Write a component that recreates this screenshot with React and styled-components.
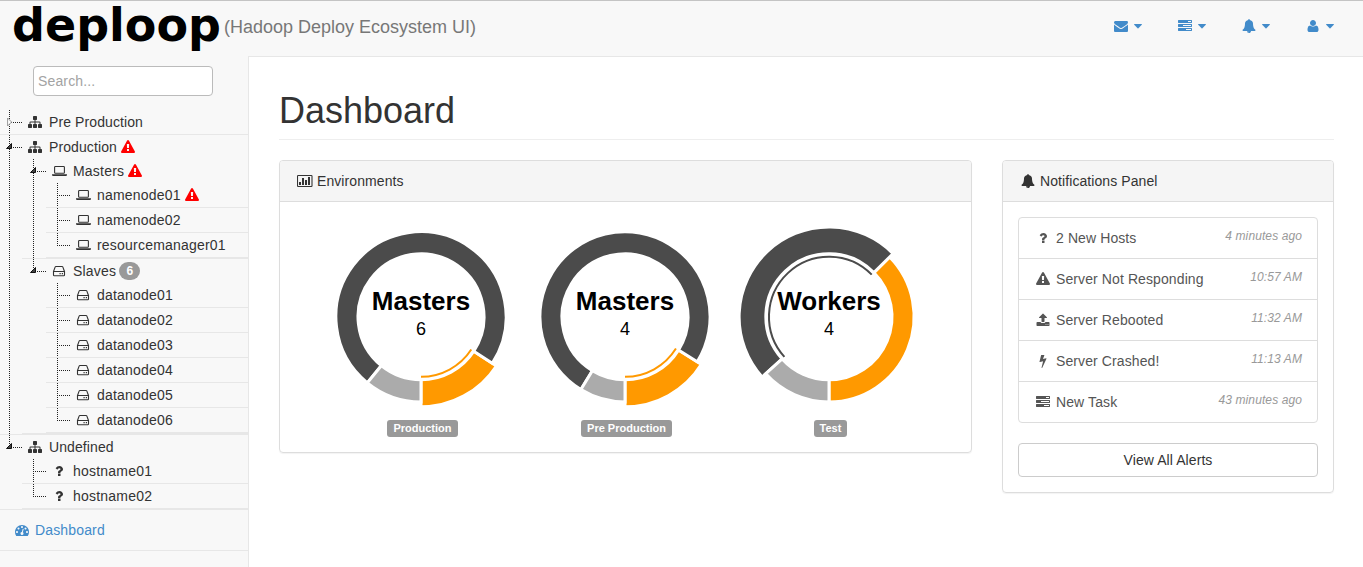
import React from "react";
import styled, { createGlobalStyle } from "styled-components";

const GlobalStyle = createGlobalStyle`
  *, *::before, *::after { box-sizing: border-box; }
  body {
    margin: 0;
    background: #fff;
    color: #333;
    font-family: "Liberation Sans", Arial, sans-serif;
    font-size: 14px;
    line-height: 20px;
  }
  #root { height: 100vh; overflow: hidden; }
`;

/* ---------- icons ---------- */

const glyphs = {
  envelope: "M1792 710v794q0 66-47 113t-113 47h-1472q-66 0-113-47t-47-113v-794q44 49 101 87 362 246 497 345 57 42 92.5 65.5t94.5 48 110 24.5h2q51 0 110-24.5t94.5-48 92.5-65.5q170-123 498-345 57-39 100-87zm0-294q0 79-49 151t-122 123q-376 261-468 325-10 7-42.5 31t-54 38.5-52 32.5-57.5 27-50 9h-2q-23 0-50-9t-57.5-27-52-32.5-54-38.5-42.5-31q-91-64-262-182.5t-205-142.5q-62-42-117-115.5t-55-136.5q0-78 41.5-130t118.5-52h1472q65 0 112.5 47t47.5 113z",
  tasks: "M1024 1408h640v-128h-640v128zm-384-512h1024v-128h-1024v128zm640-512h384v-128h-384v128zm512 832v256q0 26-19 45t-45 19h-1664q-26 0-45-19t-19-45v-256q0-26 19-45t45-19h1664q26 0 45 19t19 45zm0-512v256q0 26-19 45t-45 19h-1664q-26 0-45-19t-19-45v-256q0-26 19-45t45-19h1664q26 0 45 19t19 45zm0-512v256q0 26-19 45t-45 19h-1664q-26 0-45-19t-19-45v-256q0-26 19-45t45-19h1664q26 0 45 19t19 45z",
  bell: "M912 1696q0-16-16-16-59 0-101.5-42.5t-42.5-101.5q0-16-16-16t-16 16q0 73 51.5 124.5t124.5 51.5q16 0 16-16zm816-288q0 52-38 90t-90 38h-448q0 106-75 181t-181 75-181-75-75-181h-448q-52 0-90-38t-38-90q50-42 91-88t85-119.5 74.5-158.5 50-206 19.5-260q0-152 117-282.5t307-158.5q-8-19-8-39 0-40 28-68t68-28 68 28 28 68q0 20-8 39 190 28 307 158.5t117 282.5q0 139 19.5 260t50 206 74.5 158.5 85 119.5 91 88z",
  user: "M1600 1405q0 120-73 189.5t-194 69.5h-874q-121 0-194-69.5t-73-189.5q0-53 3.500-103.500t14-109 26.500-108.500 43-97.500 62-81 85.500-53.500 111.500-20q9 0 42 21.500t74.500 48 108 48 133.500 21.500 133.500-21.500 108-48 74.500-48 42-21.500q61 0 111.500 20t85.500 53.500 62 81 43 97.500 26.500 108.500 14 109 3.500 103.500zm-320-893q0 159-112.500 271.500t-271.500 112.500-271.500-112.500-112.500-271.500 112.500-271.500 271.500-112.500 271.500 112.500 112.500 271.500z",
  warning: "M1024 1375v-190q0-14-9.500-23.500t-22.500-9.500h-192q-13 0-22.500 9.500t-9.500 23.500v190q0 14 9.500 23.500t22.500 9.500h192q13 0 22.500-9.500t9.500-23.500zm-2-374l18-459q0-12-10-19-13-11-24-11h-220q-11 0-24 11-10 7-10 21l17 457q0 10 10 16.500t24 6.500h185q14 0 23.500-6.500t10.500-16.500zm-14-934l768 1408q35 63-2 126-17 29-46.500 46t-63.500 17h-1536q-34 0-63.500-17t-46.500-46q-37-63-2-126l768-1408q17-31 47-49t65-18 65 18 47 49z",
  sitemap: "M1792 1248v320q0 40-28 68t-68 28h-320q-40 0-68-28t-28-68v-320q0-40 28-68t68-28h96v-192h-512v192h96q40 0 68 28t28 68v320q0 40-28 68t-68 28h-320q-40 0-68-28t-28-68v-320q0-40 28-68t68-28h96v-192h-512v192h96q40 0 68 28t28 68v320q0 40-28 68t-68 28h-320q-40 0-68-28t-28-68v-320q0-40 28-68t68-28h96v-192q0-52 38-90t90-38h512v-192h-96q-40 0-68-28t-28-68v-320q0-40 28-68t68-28h320q40 0 68 28t28 68v320q0 40-28 68t-68 28h-96v192h512q52 0 90 38t38 90v192h96q40 0 68 28t28 68z",
  question: "M1088 1256v240q0 16-12 28t-28 12h-240q-16 0-28-12t-12-28v-240q0-16 12-28t28-12h240q16 0 28 12t12 28zm316-600q0 54-15.500 101t-35 76.500-55 59.500-57.500 43.500-61 35.500q-41 23-68.500 65t-27.500 67q0 17-12 32.500t-28 15.500h-240q-15 0-25.500-18.500t-10.500-37.500v-45q0-83 65-156.500t143-108.500q59-27 84-56t25-76q0-42-46.500-74t-107.500-32q-65 0-108 29-35 25-107 115-13 16-31 16-12 0-25-8l-164-125q-13-10-15.500-25t5.500-28q160-266 464-266 80 0 161 31t146 83 106 127.500 41 158.500z",
  bolt: "M1333 566q18 20 7 44l-540 1157q-13 25-42 25-4 0-14-2-17-5-25.500-19t-4.500-30l197-808-406 101q-4 1-12 1-18 0-31-11-18-15-13-39l201-825q4-14 16-23t28-9h328q19 0 32 12.500t13 29.500q0 8-5 18l-171 463 396-98q8-2 12-2 19 0 34 15z",
  upload: "M1344 1472q0-26-19-45t-45-19-45 19-19 45 19 45 45 19 45-19 19-45zm256 0q0-26-19-45t-45-19-45 19-19 45 19 45 45 19 45-19 19-45zm128-224v320q0 40-28 68t-68 28h-1472q-40 0-68-28t-28-68v-320q0-40 28-68t68-28h427q21 56 70.500 92t110.500 36h256q61 0 110.500-36t70.500-92h427q40 0 68 28t28 68zm-325-648q-17 40-59 40h-256v448q0 26-19 45t-45 19h-256q-26 0-45-19t-19-45v-448h-256q-42 0-59-40-17-39 14-69l448-448q18-19 45-19t45 19l448 448q31 30 14 69z",
  gauge: "M384 1152q0-53-37.500-90.500t-90.500-37.500-90.500 37.500-37.500 90.500 37.500 90.500 90.500 37.500 90.500-37.500 37.500-90.500zm192-448q0-53-37.500-90.500t-90.500-37.500-90.500 37.500-37.500 90.500 37.500 90.500 90.500 37.500 90.500-37.500 37.500-90.500zm428 481l101-382q6-26-7.500-48.500t-38.500-29.500-48 6.500-30 39.500l-101 382q-60 5-107 43.500t-63 98.500q-20 77 20 146t117 89 146-20 89-117q16-60-6-117t-72-91zm660-33q0-53-37.500-90.500t-90.500-37.500-90.500 37.500-37.500 90.500 37.500 90.500 90.500 37.500 90.500-37.500 37.500-90.500zm-640-640q0-53-37.500-90.500t-90.500-37.500-90.500 37.500-37.500 90.500 37.500 90.500 90.500 37.500 90.500-37.500 37.500-90.500zm448 192q0-53-37.500-90.500t-90.500-37.500-90.500 37.500-37.500 90.500 37.500 90.500 90.500 37.500 90.500-37.500 37.500-90.500zm320 448q0 261-141 483-19 29-54 29h-1402q-35 0-54-29-141-221-141-483 0-182 71-348t191-286 286-191 348-71 348 71 286 191 191 286 71 348z",
};

const IconSlot = styled.span`
  flex: none;
  display: inline-flex;
  justify-content: center;
  align-items: center;
  width: ${(p) => p.$width || 18}px;
  height: 14px;
  color: ${(p) => p.$color || "inherit"};
  svg { display: block; flex: none; }
`;

function Icon({ name, width, color }) {
  let drawing;
  if (name === "laptop") {
    drawing = (
      <svg width="15" height="14" viewBox="0 0 15 14">
        <rect x="2.600" y="2.500" width="9.800" height="6.800" rx="0.800" fill="none" stroke="currentColor" strokeWidth="1.100" />
        <path d="M0 10.200h15v0.800q0 .9-1.200.9H1.200Q0 11.900 0 11z" fill="currentColor" />
      </svg>
    );
  } else if (name === "disk") {
    drawing = (
      <svg width="14" height="14" viewBox="0 0 14 14">
        <path
          d="M1.500 7.500h11v3.500q0 .8-.8.8H2.300q-.8 0-.8-.8zM1.600 7.300L3.200 2.900q.2-.4.700-.4h6.200q.5 0 .7.400l1.600 4.400"
          fill="none"
          stroke="currentColor"
          strokeWidth="1.100"
        />
        <path d="M7.500 9h1.200v1.200H7.500zM9.800 9H11v1.200H9.800z" fill="currentColor" />
      </svg>
    );
  } else if (name === "chart") {
    drawing = (
      <svg width="16" height="14" viewBox="0 0 16 14">
        <rect x="0.500" y="1.500" width="14.500" height="11" rx="0.700" fill="none" stroke="currentColor" strokeWidth="1.100" />
        <path d="M2 8h2v3H2zM5 4h2v7H5zM8 6h2v5H8zM11 3h2v8h-2z" fill="currentColor" />
      </svg>
    );
  } else {
    drawing = (
      <svg width="14" height="14" viewBox="0 0 1792 1792">
        <path d={glyphs[name]} fill="currentColor" />
      </svg>
    );
  }
  return <IconSlot $width={width} $color={color}>{drawing}</IconSlot>;
}

const CaretSvg = styled.svg`
  display: block;
  margin-top: 1px;
`;

const Caret = () => (
  <CaretSvg width="8" height="5" viewBox="0 0 8 5">
    <path d="M.5 0h7q.7.200.3.800L4.400 4.300q-.4.400-.8 0L.2.800Q-.2.200.5 0z" fill="currentColor" />
  </CaretSvg>
);

/* ---------- header ---------- */

const Page = styled.div`
  display: flex;
  flex-direction: column;
  height: 100%;
`;

const Header = styled.header`
  flex: none;
  display: flex;
  justify-content: space-between;
  height: 56px;
  padding: 0 29px 0 12px;
  border-top: 1px solid #c4c4c4;
  background: #f8f8f8;
`;

const Brand = styled.div`
  display: flex;
  color: #777;
  font-size: 18px;
  line-height: 52px;
`;

const Logo = styled.span`
  width: 212px;
  color: #000;
  font: bold 46px/48px "DejaVu Sans", sans-serif;
`;

const NavIcons = styled.nav`
  display: flex;
  align-items: center;
  gap: 34px;
  height: 50px;
`;

const NavButton = styled.a`
  display: flex;
  align-items: center;
  gap: 4px;
  color: #428bca;
`;

/* ---------- sidebar ---------- */

const Body = styled.div`
  flex: 1;
  display: flex;
  min-height: 0;
`;

const Sidebar = styled.aside`
  flex: none;
  width: 248px;
  background: #f8f8f8;
`;

const SearchBox = styled.div`
  padding: 10px 35px 14px 33px;
`;

const SearchInput = styled.input`
  display: block;
  width: 180px;
  height: 30px;
  padding: 0 4px;
  border: 1px solid #bbb;
  border-radius: 4px;
  background: #fff;
  font: 14px "Liberation Sans", Arial, sans-serif;
  letter-spacing: 0.15px;
  &::placeholder { color: #a3a3a3; opacity: 1; }
`;

const Branch = styled.ul`
  margin: 0;
  padding: 0 0 0 ${(p) => (p.$depth === 0 ? 0 : p.$depth === 1 ? 22 : 24)}px;
  list-style: none;
`;

const Node = styled.li`
  --rail: ${(p) => (p.$depth === 0 ? 9 : 11)}px;
  border-bottom: 1px solid #e7e7e7;
  background-repeat: no-repeat;
  background-image:
    repeating-linear-gradient(to bottom, #222 0 1px, transparent 1px 2px),
    repeating-linear-gradient(to right, #222 0 1px, transparent 1px 2px);
  background-position: var(--rail) 0, calc(var(--rail) + 2px) 12px;
  background-size: 1px ${(p) => (p.$last ? "13px" : "100%")}, 11px 1px;
`;

const NodeRow = styled.div`
  display: flex;
  align-items: center;
  height: 24px;
  padding-left: ${(p) => (p.$depth === 0 ? 4 : 6)}px;
`;

const ToggleSlot = styled.span`
  flex: none;
  width: 22px;
  height: 12px;
  svg { display: block; }
`;

const NodeLabel = styled.span`
  margin: 0 4px;
  padding-left: 1px;
  letter-spacing: ${(p) => (p.$depth === 0 ? 0.1 : 0.21)}px;
`;

const Badge = styled.span`
  width: 21px;
  height: 18px;
  margin-left: -1px;
  border-radius: 9px;
  background: #999;
  color: #fff;
  font-size: 12px;
  font-weight: bold;
  line-height: 18px;
  text-align: center;
`;

const SideLink = styled.a`
  display: flex;
  align-items: center;
  gap: 4px;
  height: 41px;
  padding-left: 13px;
  border-bottom: 1px solid #e7e7e7;
  color: #428bca;
  letter-spacing: 0.15px;
`;

const datanodes = ["01", "02", "03", "04", "05", "06"];

const tree = [
  { label: "Pre Production", icon: "sitemap", collapsed: true },
  {
    label: "Production",
    icon: "sitemap",
    alert: true,
    children: [
      {
        label: "Masters",
        icon: "laptop",
        alert: true,
        children: [
          { label: "namenode01", icon: "laptop", alert: true },
          { label: "namenode02", icon: "laptop" },
          { label: "resourcemanager01", icon: "laptop" },
        ],
      },
      {
        label: "Slaves",
        icon: "disk",
        count: 6,
        children: datanodes.map((n) => ({ label: "datanode" + n, icon: "disk" })),
      },
    ],
  },
  {
    label: "Undefined",
    icon: "sitemap",
    children: [
      { label: "hostname01", icon: "question" },
      { label: "hostname02", icon: "question" },
    ],
  },
];

function Toggle({ node }) {
  return (
    <ToggleSlot>
      {node.children && (
        <svg width="10" height="12" viewBox="0 0 10 12">
          <path d="M2.500 7.500h5v-5z" fill="#444" stroke="#111" strokeWidth="1" />
        </svg>
      )}
      {node.collapsed && (
        <svg width="10" height="12" viewBox="0 0 10 12">
          <path d="M3.600 2v8l4-4z" fill="#fff" stroke="#999" strokeWidth="1" />
        </svg>
      )}
    </ToggleSlot>
  );
}

function Tree({ nodes, depth }) {
  return (
    <Branch $depth={depth}>
      {nodes.map((node, i) => (
        <Node key={node.label} $depth={depth} $last={i === nodes.length - 1}>
          <NodeRow $depth={depth}>
            <Toggle node={node} />
            <Icon name={node.icon} />
            <NodeLabel $depth={depth}>{node.label}</NodeLabel>
            {node.alert && <Icon name="warning" width={14} color="#f00" />}
            {node.count && <Badge>{node.count}</Badge>}
          </NodeRow>
          {node.children && <Tree nodes={node.children} depth={depth + 1} />}
        </Node>
      ))}
    </Branch>
  );
}

/* ---------- main area ---------- */

const Main = styled.main`
  flex: 1;
  min-width: 0;
  padding: 0 29px 0 30px;
  border-top: 1px solid #e7e7e7;
  border-left: 1px solid #e7e7e7;
`;

const PageTitle = styled.h1`
  margin: 0 0 20px;
  padding-top: 34px;
  height: 83px;
  border-bottom: 1px solid #eee;
  font-size: 36px;
  font-weight: normal;
  line-height: 40px;
`;

const Columns = styled.div`
  display: flex;
  align-items: flex-start;
  gap: 30px;
`;

const Panel = styled.section`
  flex: ${(p) => (p.$width ? `0 0 ${p.$width}px` : "1")};
  border: 1px solid #ddd;
  border-radius: 4px;
  box-shadow: 0 1px 1px rgba(0, 0, 0, 0.05);
`;

const PanelHeading = styled.div`
  display: flex;
  align-items: center;
  gap: 3px;
  height: 41px;
  padding: 0 16px;
  border-bottom: 1px solid #ddd;
  border-radius: 3px 3px 0 0;
  background: #f5f5f5;
  letter-spacing: 0.08px;
`;

const ChartRow = styled.div`
  display: flex;
  height: 250px;
  padding: 15px 0 0 39px;
`;

const ChartCell = styled.figure`
  display: flex;
  flex-direction: column;
  align-items: center;
  width: 204px;
  margin: 0;
`;

const DonutSvg = styled.svg`
  display: block;
  width: 204px;
  height: 200px;
`;

const Title = styled.text`
  font: bold 26px "Liberation Sans", Arial, sans-serif;
  text-anchor: middle;
`;

const Value = styled.text`
  font: 18px "Liberation Sans", Arial, sans-serif;
  text-anchor: middle;
`;

const Tag = styled.figcaption`
  height: 17px;
  margin: 3px 0 0 3px;
  padding: 0 6px;
  border-radius: 3px;
  background: #999;
  color: #fff;
  font-size: 11px;
  font-weight: bold;
  line-height: 17px;
`;

const CX = 102;
const CY = 99.800;

/* Angles run counter-clockwise in degrees, starting at the bottom of the ring. */
function point(radius, angle) {
  const a = (angle * Math.PI) / 180;
  return `${(CX + radius * Math.sin(a)).toFixed(2)} ${(CY + radius * Math.cos(a)).toFixed(2)}`;
}

function slicePath(inner, outer, from, to) {
  const large = to - from > 180 ? 1 : 0;
  return `M${point(inner, from)}L${point(outer, from)}A${outer} ${outer} 0 ${large} 0 ${point(outer, to)}L${point(inner, to)}A${inner} ${inner} 0 ${large} 1 ${point(inner, from)}Z`;
}

function arcPath(radius, from, to) {
  return `M${point(radius, from)}A${radius} ${radius} 0 ${to - from > 180 ? 1 : 0} 0 ${point(radius, to)}`;
}

const sliceColors = ["#ff9900", "#4b4b4b", "#ababab"];

function Donut({ title, value, tag, stops, active }) {
  const edges = [0, ...stops, 360];
  return (
    <ChartCell>
      <DonutSvg viewBox="0 0 204 200">
        {sliceColors.map((color, i) => (
          <path
            key={color}
            d={slicePath(63, i === active ? 90 : 85.100, edges[i], edges[i + 1])}
            fill={color}
            stroke="#fff"
            strokeWidth="3"
          />
        ))}
        <path
          d={arcPath(60, edges[active], edges[active + 1])}
          fill="none"
          stroke={sliceColors[active]}
          strokeWidth="2"
        />
        <Title x="102" y="93">{title}</Title>
        <Value x="102" y="118">{value}</Value>
      </DonutSvg>
      <Tag>{tag}</Tag>
    </ChartCell>
  );
}

const NoticeBody = styled.div`
  padding: 15px;
`;

const NoticeList = styled.div`
  margin-bottom: 20px;
  border: 1px solid #ddd;
  border-radius: 4px;
`;

const NoticeItem = styled.a`
  display: flex;
  align-items: center;
  gap: 4px;
  height: 41px;
  padding: 0 15px;
  color: #555;
  letter-spacing: 0.1px;
  & + & { border-top: 1px solid #ddd; }
  &:first-child { height: 40px; }
`;

const NoticeTime = styled.em`
  margin: -4px 0 0 auto;
  color: #999;
  font-size: 12px;
`;

const AlertsButton = styled.button`
  display: block;
  width: 100%;
  height: 34px;
  border: 1px solid #ccc;
  border-radius: 4px;
  background: #fff;
  color: #333;
  font: 14px "Liberation Sans", Arial, sans-serif;
  letter-spacing: 0.08px;
`;

const notices = [
  { icon: "question", text: "2 New Hosts", time: "4 minutes ago" },
  { icon: "warning", text: "Server Not Responding", time: "10:57 AM" },
  { icon: "upload", text: "Server Rebooted", time: "11:32 AM" },
  { icon: "bolt", text: "Server Crashed!", time: "11:13 AM" },
  { icon: "tasks", text: "New Task", time: "43 minutes ago" },
];

export default function App() {
  return (
    <Page>
      <GlobalStyle />
      <Header>
        <Brand>
          <Logo>deploop</Logo>
          (Hadoop Deploy Ecosystem UI)
        </Brand>
        <NavIcons>
          {["envelope", "tasks", "bell", "user"].map((name) => (
            <NavButton key={name}>
              <Icon name={name} />
              <Caret />
            </NavButton>
          ))}
        </NavIcons>
      </Header>
      <Body>
        <Sidebar>
          <SearchBox>
            <SearchInput placeholder="Search..." />
          </SearchBox>
          <Tree nodes={tree} depth={0} />
          <SideLink>
            <Icon name="gauge" />
            Dashboard
          </SideLink>
        </Sidebar>
        <Main>
          <PageTitle>Dashboard</PageTitle>
          <Columns>
            <Panel>
              <PanelHeading>
                <Icon name="chart" />
                Environments
              </PanelHeading>
              <ChartRow>
                <Donut title="Masters" value="6" tag="Production" stops={[56.900, 320.900]} active={0} />
                <Donut title="Masters" value="4" tag="Pre Production" stops={[58.100, 328.800]} active={0} />
                <Donut title="Workers" value="4" tag="Test" stops={[134.600, 312]} active={1} />
              </ChartRow>
            </Panel>
            <Panel $width={332}>
              <PanelHeading>
                <Icon name="bell" />
                Notifications Panel
              </PanelHeading>
              <NoticeBody>
                <NoticeList>
                  {notices.map((n) => (
                    <NoticeItem key={n.text}>
                      <Icon name={n.icon} />
                      {n.text}
                      <NoticeTime>{n.time}</NoticeTime>
                    </NoticeItem>
                  ))}
                </NoticeList>
                <AlertsButton>View All Alerts</AlertsButton>
              </NoticeBody>
            </Panel>
          </Columns>
        </Main>
      </Body>
    </Page>
  );
}
